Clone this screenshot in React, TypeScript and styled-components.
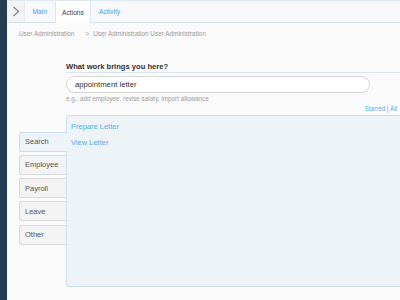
import React from 'react'
import styled, { createGlobalStyle } from 'styled-components'

const Global = createGlobalStyle`
  html, body {
    margin: 0;
    padding: 0;
    height: 100%;
    overflow: hidden;
    background: #fafafa;
    font-family: "Liberation Sans", Arial, sans-serif;
  }
  #root {
    height: 100%;
  }
`

const Page = styled.div`
  display: flex;
  height: 300px;
`

const Rail = styled.div`
  width: 7px;
  flex: none;
  background: #273c53;
`

const Main = styled.div`
  flex: 1;
  display: flex;
  flex-direction: column;
  min-width: 0;
`

const TabBar = styled.div`
  display: flex;
  height: 21px;
  background: #f6f8fa;
  border-top: 1px solid #dfe9f1;
  border-bottom: 1px solid #d5e3ee;
`

const Toggle = styled.div`
  width: 17px;
  display: flex;
  align-items: center;
  justify-content: center;
  border-right: 1px solid #e6ecf1;
  background: #f1f3f5;
`

const Tab = styled.div<{ $active?: boolean }>`
  display: flex;
  align-items: center;
  padding: 0 6.5px;
  font-size: 6.7px;
  color: ${(p) => (p.$active ? '#444' : '#45a3ec')};
  background: ${(p) => (p.$active ? '#fff' : 'transparent')};
  border-left: 1px solid ${(p) => (p.$active ? '#dde7ef' : 'transparent')};
  border-right: 1px solid ${(p) => (p.$active ? '#dde7ef' : 'transparent')};
  margin-bottom: ${(p) => (p.$active ? '-1px' : '0')};
`

const Crumbs = styled.div`
  display: flex;
  align-items: center;
  height: 20px;
  padding-left: 12px;
  font-size: 6.4px;
  color: #9a9a9a;
  gap: 11px;
`

const CrumbNext = styled.span`
  &::before {
    content: '>';
    margin-right: 4px;
  }
`

const Body = styled.div`
  flex: 1;
  display: flex;
  flex-direction: column;
  padding-left: 12px;
`

const Finder = styled.div`
  margin-left: 47px;
  margin-top: 18.5px;
`

const Question = styled.div`
  font-size: 7.6px;
  font-weight: bold;
  color: #333;
  padding-bottom: 1px;
  border-bottom: 1px solid #d6e6f3;
`

const Input = styled.div`
  margin-top: 3.5px;
  width: 294px;
  height: 15px;
  display: flex;
  align-items: center;
  padding-left: 8px;
  box-sizing: content-box;
  border: 1px solid #d4d4d4;
  border-radius: 9px;
  background: #fff;
  font-size: 7.7px;
  color: #333;
`

const Hint = styled.div`
  margin-top: 2px;
  font-size: 6.3px;
  color: #a0a0a0;
`

const Filter = styled.div`
  text-align: right;
  padding-right: 3px;
  margin-top: 3px;
  font-size: 6.3px;
  color: #5aaeea;
  span {
    color: #999;
    margin: 0 1.5px;
  }
`

const Split = styled.div`
  display: flex;
  margin-top: 3px;
  height: 172px;
`

const SideTabs = styled.div`
  width: 47px;
  flex: none;
  display: flex;
  flex-direction: column;
  gap: 3.3px;
  padding-top: 16.5px;
`

const SideTab = styled.div<{ $active?: boolean }>`
  height: 18px;
  display: flex;
  align-items: center;
  padding-left: 5px;
  font-size: 7.5px;
  color: #555;
  background: ${(p) => (p.$active ? '#eef3f8' : '#f3f3f3')};
  border: 1px solid ${(p) => (p.$active ? '#c9ddee' : '#d9d9d9')};
  border-right: none;
  border-radius: 3px 0 0 3px;
  margin-right: ${(p) => (p.$active ? '-1px' : '0')};
  position: relative;
  z-index: ${(p) => (p.$active ? 1 : 0)};
`

const Panel = styled.div`
  flex: 1;
  background: #eef3f7;
  border: 1px solid #cde0ef;
  border-right: none;
  border-radius: 3px 0 0 3px;
  padding: 6px 4px;
  display: flex;
  flex-direction: column;
  gap: 7px;
`

const Link = styled.div`
  font-size: 7.5px;
  color: #56ade9;
`

const Chevron = () => (
  <svg width="8" height="11" viewBox="0 0 8 11">
    <polyline points="1.5,1 6.5,5.5 1.5,10" fill="none" stroke="#8a8a8a" strokeWidth="1.4" />
  </svg>
)

export default function App() {
  return (
    <Page>
      <Global />
      <Rail />
      <Main>
        <TabBar>
          <Toggle>
            <Chevron />
          </Toggle>
          <Tab>Main</Tab>
          <Tab $active>Actions</Tab>
          <Tab>Activity</Tab>
        </TabBar>
        <Crumbs>
          <span>User Administration</span>
          <CrumbNext>User Administration User Administration</CrumbNext>
        </Crumbs>
        <Body>
          <Finder>
            <Question>What work brings you here?</Question>
            <Input>appointment letter</Input>
            <Hint>e.g.: add employee, revise salary, import allowance</Hint>
            <Filter>
              Starred<span>|</span>All
            </Filter>
          </Finder>
          <Split>
            <SideTabs>
              <SideTab $active>Search</SideTab>
              <SideTab>Employee</SideTab>
              <SideTab>Payroll</SideTab>
              <SideTab>Leave</SideTab>
              <SideTab>Other</SideTab>
            </SideTabs>
            <Panel>
              <Link>Prepare Letter</Link>
              <Link>View Letter</Link>
            </Panel>
          </Split>
        </Body>
      </Main>
    </Page>
  )
}
